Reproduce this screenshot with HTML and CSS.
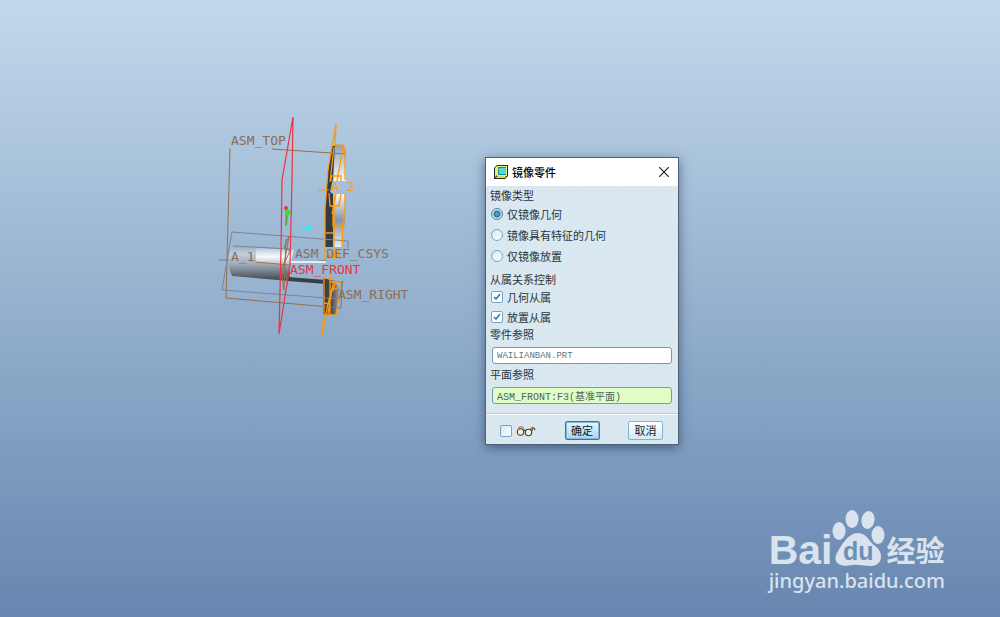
FILE: index.html
```html
<!DOCTYPE html>
<html lang="zh-CN">
<head>
    <meta charset="UTF-8">
    <meta name="viewport" content="width=device-width, initial-scale=1.0">
    <title>镜像零件</title>
    <link rel="stylesheet" href="styles.css">
</head>
<body>

    <!-- Assembly model -->
    <svg class="model" width="200" height="230" viewBox="215 110 200 230">
        <defs>
            <linearGradient id="shaft" x1="0" y1="0" x2="0" y2="1">
                <stop offset="0" stop-color="#9fb2c6"/>
                <stop offset="0.2" stop-color="#c3ced9"/>
                <stop offset="0.55" stop-color="#98a4b1"/>
                <stop offset="1" stop-color="#3c4249"/>
            </linearGradient>
            <linearGradient id="shine" x1="0" y1="0" x2="0" y2="1">
                <stop offset="0" stop-color="#b5c8d8"/>
                <stop offset="0.5" stop-color="#f6fafc"/>
                <stop offset="1" stop-color="#b3bdc8"/>
            </linearGradient>
            <linearGradient id="plate" x1="0" y1="0" x2="0" y2="1">
                <stop offset="0" stop-color="#90a2b5"/>
                <stop offset="1" stop-color="#f8fafb"/>
            </linearGradient>
            <linearGradient id="lower" x1="0" y1="0" x2="0" y2="1">
                <stop offset="0" stop-color="#f4f7f9"/>
                <stop offset="0.5" stop-color="#8896a6"/>
                <stop offset="1" stop-color="#e7edf2"/>
            </linearGradient>
            <linearGradient id="foot" x1="0" y1="0" x2="1" y2="0">
                <stop offset="0" stop-color="#343a40"/>
                <stop offset="0.45" stop-color="#444a51"/>
                <stop offset="1" stop-color="#a0adba"/>
            </linearGradient>
        </defs>

        <!-- shaft -->
        <path d="M232 247L290 250L290 281L232 276Q225 262 232 247Z" fill="url(#shaft)"/>
        <path d="M256 248L294 250L290 265L256 262Z" fill="url(#shine)"/>
        <path d="M288 277L326 280L326 284L288 281Z" fill="#383e44"/>
        <path d="M290 262H326" stroke="#fff" stroke-width="1.5"/>

        <!-- plate -->
        <path d="M334 145H343L346 150V181H334Z" fill="url(#plate)"/>
        <path d="M333 194H345V222L342 247H333Z" fill="url(#lower)"/>
        <path d="M332 146L335 146L333 178L330 192L333 194V247H325V210L328 170Z" fill="#353b42"/>
        <path d="M323 278L334 281L341 291L336 315H323Z" fill="url(#foot)"/>

        <!-- datum planes -->
        <g fill="none" stroke="#92704f">
            <path d="M230 148L226 298L341 308L342 282L333 281"/>
            <path d="M272 149L346 154"/>
            <path d="M256 262L290 265" stroke="#a57645"/>
            <path d="M219 260H226M228 260H229"/>
        </g>
        <g fill="none" stroke="#75859b">
            <path d="M232 232L348 241V248M232 232L222 290L339 299L343 281"/>
            <path d="M233 246L290 249"/>
        </g>
        <path d="M286 239L284 290L281 270L290 251L284 247L289 236L284 265L288 285" fill="none" stroke="#8e7056"/>

        <!-- selected part edges -->
        <g fill="none" stroke="#fb9a0e" stroke-width="1.3">
            <path d="M336 124L328 170L325 210V260M336 124L335 146M334 145H343L345 149V180M343 147L337 181M334 147L330 182"/>
            <path d="M331 176H341V181M331 176V181M329 193L330 206H339L341 194M334 194V259M345 193V213L343 222L342 247M336 194L332 214M326 233H333M334 227H345M333 205V227"/>
            <path d="M324 278V314L322 335L328 304L334 281M324 278H334M323 315H336L340 291M330 279V315M333 284L328 314M324 303L329 304M336 281L333 290L341 286"/>
            <path d="M328 257L331 252L334 258L338 251L340 258M328 257H340M330 282L341 282"/>
        </g>

        <!-- coordinate axes -->
        <path d="M286 226L288 211" stroke="#19e53c" stroke-width="2"/>
        <path d="M286 225V208" stroke="#bf6a3c"/>
        <circle cx="286" cy="208" r="2" fill="#ef3340"/>
        <circle cx="288" cy="212" r="2.5" fill="#1df21d"/>
        <path d="M286 227L308 228.500" stroke="#34e4f4"/>
        <circle cx="309" cy="228" r="2.5" fill="#25f2fb"/>

        <path d="M293 117L292 180L290 265L279 334L281 250L282 180L293 117" fill="none" stroke="#ea343f" stroke-width="1.2"/>

        <g class="datum-text">
            <text x="231" y="145">ASM_TOP</text>
            <text x="231" y="261">A_1</text>
            <text x="295" y="258">ASM_DEF_CSYS</text>
            <text x="338" y="299">ASM_RIGHT</text>
            <text x="290" y="274" class="front">ASM_FRONT</text>
            <text x="331" y="191" class="picked">A_2</text>
        </g>
        <path d="M318 190H329" stroke="#d4983e" stroke-dasharray="3 1"/>
    </svg>

    <!-- Mirror part dialog -->
    <form class="dialog">
        <div class="title-bar">
            <svg width="14" height="14" viewBox="0 0 14 14">
                <path d="M0 3L3 0H14V11L11 14H0Z" fill="#222c25"/>
                <path d="M1 3L3 1V10L1 12Z" fill="#f6ee58"/>
                <path d="M1 13L4 11H12L11 13Z" fill="#e5d849"/>
                <path d="M3 1H13V11H3Z" fill="#eef083"/>
                <path d="M4 2H12V10H4Z" fill="#168f91"/>
                <path d="M5 3H12V9H5Z" fill="#48dce0"/>
            </svg>
            <h2>镜像零件</h2>
            <button type="button" class="close" aria-label="关闭">
                <svg width="10" height="10" viewBox="0 0 10 10"><path d="M0 0L10 10M10 0L0 10" stroke="#222" stroke-width="1.2"/></svg>
            </button>
        </div>

        <div class="content">
            <fieldset class="types">
                <legend>镜像类型</legend>
                <label><input type="radio" name="type" checked>仅镜像几何</label>
                <label><input type="radio" name="type">镜像具有特征的几何</label>
                <label><input type="radio" name="type">仅镜像放置</label>
            </fieldset>

            <fieldset class="depends">
                <legend>从属关系控制</legend>
                <label><input type="checkbox" checked>几何从属</label>
                <label><input type="checkbox" checked>放置从属</label>
            </fieldset>

            <label class="caption" for="part">零件参照</label>
            <input type="text" id="part" value="WAILIANBAN.PRT">

            <label class="caption" for="plane">平面参照</label>
            <input type="text" id="plane" class="active" value="ASM_FRONT:F3(基准平面)">
        </div>

        <div class="footer">
            <label class="preview">
                <input type="checkbox" aria-label="预览">
                <svg width="20" height="12" viewBox="0 0 20 12" fill="#f3efe2" stroke="#433a30" stroke-width="1.1">
                    <circle cx="4.5" cy="7" r="3.2"/>
                    <circle cx="12.500" cy="7.5" r="3.2"/>
                    <path d="M8 6Q9 4 10 6M16 6Q16 3 18 3L19 5" fill="none"/>
                    <path d="M2 5Q3 1 6 2L8 4M14 4L17 2" fill="none" stroke="#ad7445"/>
                </svg>
            </label>
            <button type="button" class="ok">确定</button>
            <button type="button">取消</button>
        </div>
    </form>

    <!-- Watermark -->
    <div class="watermark">
        <div class="brand">
            <span class="bai">Bai</span>
            <svg width="54" height="58" viewBox="0 0 54 58">
                <ellipse cx="7" cy="22" rx="6.5" ry="9"/>
                <ellipse cx="20" cy="10" rx="6.5" ry="9"/>
                <ellipse cx="36" cy="11" rx="6.5" ry="9" transform="rotate(10 36 11)"/>
                <ellipse cx="46" cy="26" rx="6.5" ry="9"/>
                <path d="M26 24C35 24 37 33 43 37C53 44 50 57 39 57C32 57 27 55 20 56C8 59 0 53 5 44C9 37 16 24 26 24Z"/>
                <text x="11" y="51">du</text>
            </svg>
            <span class="jingyan">经验</span>
        </div>
        <div class="site">jingyan.baidu.com</div>
    </div>

</body>
</html>
```
FILE: styles.css
```css
* {
    box-sizing: border-box;
}
body {
    margin: 0;
    min-height: 100vh;
    overflow: hidden;
    font-family: "Liberation Sans", "Noto Sans CJK SC", sans-serif;
    font-size: 11px;
    color: #263540;
    background: linear-gradient(#c1d9eb, #6786b0);
}
.model {
    position: absolute;
    left: 215px;
    top: 110px;
}
.datum-text {
    font-family: "DejaVu Sans Mono", monospace;
    font-size: 13px;
    fill: #8a6e56;
}
.datum-text .front {
    fill: #ef303b;
}
.datum-text .picked {
    fill: #f39f2c;
}
.dialog {
    position: absolute;
    left: 485px;
    top: 157px;
    width: 194px;
    border: 1px solid #4c6175;
    background: repeating-linear-gradient(135deg, #dce9f1 0 2px, #d8e6ef 2px 4px);
    box-shadow: 0 3px 10px rgba(25, 45, 75, 0.55);
}
.title-bar {
    display: flex;
    align-items: center;
    height: 28px;
    padding: 0 9px 0 8px;
    background: #fff;
}
.title-bar h2 {
    flex: 1;
    margin: 0 0 0 4px;
    font-size: 11px;
    font-weight: 500;
    color: #000;
}
.close {
    display: flex;
    padding: 0;
    border: none;
    background: none;
}
.content {
    padding: 2px 6px 10px 4px;
}
fieldset {
    margin: 0;
    padding: 0;
    border: none;
}
legend, .caption {
    display: block;
    padding: 0;
    line-height: 16px;
}
fieldset label {
    display: flex;
    align-items: center;
    gap: 4px;
}
.types label {
    height: 21px;
}
.types {
    margin-bottom: 6px;
}
.types legend, .depends legend {
    margin-bottom: -1px;
}
.depends label {
    height: 20px;
}
input[type="radio"], input[type="checkbox"] {
    appearance: none;
    flex: none;
    width: 12px;
    height: 12px;
    margin: 0 0 0 1px;
    border: 1px solid #76a5c2;
    border-radius: 2px;
    background: linear-gradient(135deg, #d3e8f5, #fff);
}
input[type="radio"] {
    border-radius: 50%;
}
input[type="radio"]:checked {
    background: radial-gradient(circle, #6fb4d3 0, #2c7399 3px, #c8e2ef 4px);
    border-color: #4888ac;
}
input[type="checkbox"]:checked {
    background: #fff url("data:image/svg+xml,%3Csvg xmlns='http://www.w3.org/2000/svg' viewBox='0 0 10 10'%3E%3Cpath d='M2 5L4 7L8 2' fill='none' stroke='%232a7dab' stroke-width='1.6'/%3E%3C/svg%3E");
}
input[type="text"] {
    display: block;
    width: calc(100% - 2px);
    height: 17px;
    margin: 4px 0 3px 2px;
    padding: 0 4px;
    border: 1px solid #6d9db9;
    border-radius: 3px;
    background: #fff;
    color: #68737d;
    font-family: "Liberation Mono", "Noto Sans CJK SC", monospace;
    font-size: 9px;
}
input[type="text"].active {
    margin-bottom: 0;
    background: #e0fdc4;
    color: #55615c;
    font-size: 10px;
}
.footer {
    display: flex;
    align-items: center;
    justify-content: space-between;
    padding: 6px 15px 4px 14px;
    border-top: 1px solid #f8fcfe;
    box-shadow: 0 -1px #bccbd5;
}
.preview {
    display: flex;
    align-items: center;
    gap: 4px;
}
.preview input[type="checkbox"] {
    margin: 0;
}
.footer button {
    width: 35px;
    height: 19px;
    padding: 0;
    border: 1px solid #82b1cb;
    border-radius: 2px;
    background: linear-gradient(#fff, #d4e9f5);
    color: #101c25;
    font-family: inherit;
    font-size: 11px;
    line-height: 16px;
}
.footer .ok {
    border-color: #37779d;
    background: linear-gradient(#e6f5fd, #a9d5ee);
    box-shadow: inset 0 0 0 1px #86bad7;
}
.watermark {
    position: absolute;
    right: 55px;
    bottom: 22px;
    color: #d9e3ee;
}
.brand {
    display: flex;
    align-items: flex-end;
    height: 58px;
}
.bai {
    font-family: "Liberation Sans", sans-serif;
    font-size: 41px;
    font-weight: 700;
    line-height: 34px;
}
.brand svg {
    flex: none;
    fill: #d9e3ee;
}
.brand text {
    fill: #6e8fb8;
    font-family: "Liberation Sans", sans-serif;
    font-size: 25px;
    font-weight: 700;
}
.jingyan {
    font-family: "Noto Sans CJK SC", sans-serif;
    font-size: 29px;
    font-weight: 700;
    line-height: 36px;
}
.site {
    font-family: "Noto Sans", sans-serif;
    font-size: 20px;
    font-weight: 500;
    line-height: 28px;
}
```
